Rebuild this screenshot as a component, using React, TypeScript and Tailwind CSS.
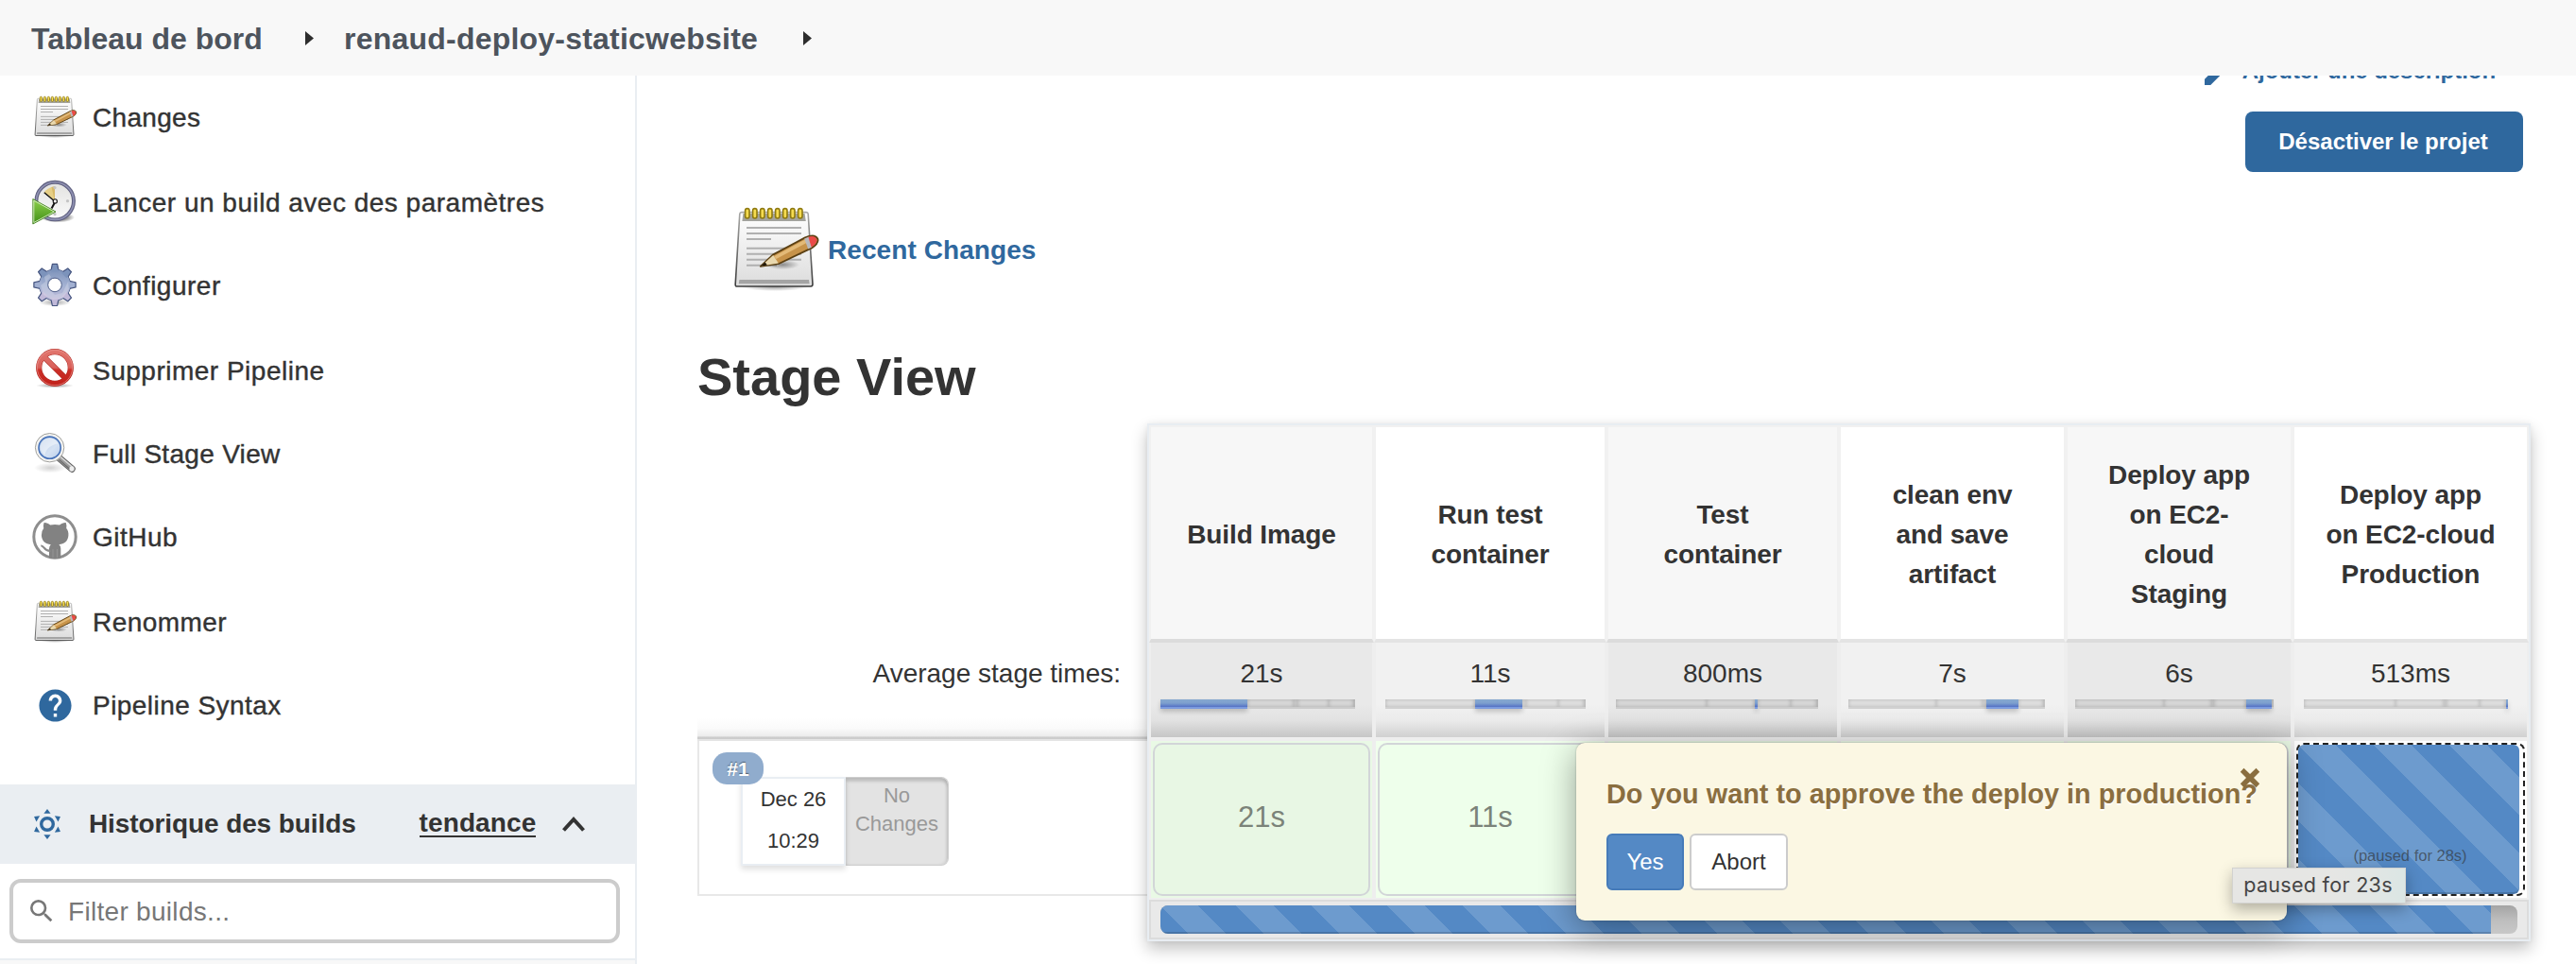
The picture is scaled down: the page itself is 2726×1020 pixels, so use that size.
import React from "react";
import { MdEdit, MdHelp, MdSearch } from "react-icons/md";

function NotepadIcon({ size = 48 }: { size?: number }) {
  return (
    <svg width={size} height={size} viewBox="0 0 48 48" className="shrink-0">
      <defs>
        <linearGradient id="np-paper" x1="0" y1="0" x2="0" y2="1">
          <stop offset="0" stopColor="#ffffff" />
          <stop offset="1" stopColor="#dcdcdc" />
        </linearGradient>
        <linearGradient id="np-edge" x1="0" y1="0" x2="0" y2="1">
          <stop offset="0" stopColor="#a8a8a6" />
          <stop offset="1" stopColor="#3c3c3c" />
        </linearGradient>
        <radialGradient id="np-shadow">
          <stop offset="0" stopColor="#000" stopOpacity=".4" />
          <stop offset="1" stopColor="#000" stopOpacity="0" />
        </radialGradient>
      </defs>
      <ellipse cx="24" cy="43.6" rx="18" ry="2.4" fill="url(#np-shadow)" />
      <path d="M6.3 4.3H40.7Q41.5 4.3 41.6 5.2L44 42.3Q44 43.5 43 43.5H4Q3 43.5 3.1 42.3L5.4 5.2Q5.5 4.3 6.3 4.3Z" fill="url(#np-paper)" stroke="url(#np-edge)" strokeWidth=".8" />
      <path d="M7.2 5H39.8L40.4 9H6.7Z" fill="#a3a39d" />
      <path d="M5.2 40H42L42.3 42.1H4.9Z" fill="#a4a4a4" />
      <g stroke="#b0b0b0" strokeWidth="1">
        <path d="M9 12.5H38M9 15.5H38M9 18.5H22M9 23.4H38M9 26.4H38M9 29.4H38M9 32.4H25" />
      </g>
      {[9.4, 13.4, 17.4, 21.4, 25.4, 29.4, 33.4, 37.4].map((x) => (
        <rect key={x} x={x - 1.1} y="2.3" width="2.2" height="5.2" rx="1.1" fill="#f6dc50" stroke="#8f7a10" strokeWidth=".8" />
      ))}
      <ellipse cx="28" cy="32" rx="9" ry="2.6" fill="url(#np-shadow)" />
      <path d="M16.4 32.9L22.9 26.8L40 17.7Q45 15.4 46.6 18.2Q47.5 20.6 43.5 23.2L26.4 31.4Z" fill="#c7934a" stroke="#5a3f12" strokeWidth=".9" strokeLinejoin="round" />
      <path d="M23.6 27.6L40 18.7L41.2 20.2L24.7 29Z" fill="#e3ba78" />
      <path d="M16.8 32.7L23.1 27L25.9 31.2Z" fill="#e9d8ae" />
      <path d="M16.4 32.9L18.8 30.8L20 32.3Z" fill="#1f1608" />
      <path d="M39.6 18.2L42 17.2L43.6 22.7L41.6 23.8Z" fill="#b9b9bd" />
      <path d="M41.7 17.4Q45 16.2 46.1 18.5Q46.7 20.5 43.3 22.8Z" fill="#ea4a48" />
    </svg>
  );
}

function ClockPlayIcon() {
  return (
    <svg width="48" height="48" viewBox="0 0 48 48" className="shrink-0">
      <defs>
        <linearGradient id="ck-play" x1="0" y1="0" x2="0" y2="1">
          <stop offset="0" stopColor="#8ed04c" />
          <stop offset="1" stopColor="#3f8f14" />
        </linearGradient>
        <linearGradient id="ck-face" x1="0" y1="0" x2="0" y2="1">
          <stop offset="0" stopColor="#e2e2e0" />
          <stop offset="1" stopColor="#fbfbfb" />
        </linearGradient>
        <radialGradient id="ck-sh">
          <stop offset=".6" stopColor="#000" stopOpacity=".4" />
          <stop offset="1" stopColor="#000" stopOpacity="0" />
        </radialGradient>
      </defs>
      <ellipse cx="27" cy="40" rx="18" ry="5.5" fill="url(#ck-sh)" />
      <circle cx="24.2" cy="22.6" r="19.8" fill="url(#ck-face)" stroke="#5f607f" strokeWidth="3.9" />
      <circle cx="24.2" cy="22.6" r="19.8" fill="none" stroke="#9092b4" strokeWidth="1.6" />
      <path d="M24 22.5L12.4 13.8Q16.5 8.2 24 7.2Z" fill="#e6cf86" />
      <path d="M24 22.5L24 7.2L20.5 8Z" fill="#d7b968" />
      <g fill="#c4c4c4">
        <circle cx="24" cy="8.6" r="1.6" />
        <circle cx="37.5" cy="22.7" r="1.6" />
        <circle cx="24" cy="36.6" r="1.6" />
      </g>
      <path d="M23.6 22.8L12.8 13.8" stroke="#111" strokeWidth="1.4" />
      <path d="M24.4 23.5L20.6 30.5" stroke="#111" strokeWidth="2" />
      <circle cx="24.3" cy="22.9" r="2.1" fill="#fff" stroke="#111" strokeWidth="1.1" />
      <path d="M.8 20.5L25 34L.8 47Z" fill="url(#ck-play)" stroke="#3d7a18" strokeWidth=".8" />
      <path d="M1.8 22.1L23.2 34L1.8 45.5Z" fill="none" stroke="#e9f7dc" strokeWidth=".8" />
    </svg>
  );
}

const GEAR_ANGLES = [0, 45, 90, 135, 180, 225, 270, 315];

function GearIcon() {
  return (
    <svg width="48" height="48" viewBox="0 0 48 48" className="shrink-0">
      <defs>
        <linearGradient id="gr-fill" gradientUnits="userSpaceOnUse" x1="0" y1="0" x2="0" y2="48">
          <stop offset="0" stopColor="#6d86b0" />
          <stop offset=".5" stopColor="#a3b1d2" />
          <stop offset="1" stopColor="#cbbfdc" />
        </linearGradient>
        <radialGradient id="gr-sh">
          <stop offset="0" stopColor="#000" stopOpacity=".35" />
          <stop offset="1" stopColor="#000" stopOpacity="0" />
        </radialGradient>
        <mask id="gr-mask">
          <rect width="48" height="48" fill="#fff" />
          <circle cx="24" cy="23.4" r="7" fill="#000" />
        </mask>
      </defs>
      <ellipse cx="24" cy="42" rx="17" ry="4" fill="url(#gr-sh)" />
      <g mask="url(#gr-mask)">
        <g fill="#45547f" stroke="#45547f" strokeWidth="1.2" strokeLinejoin="round">
          <circle cx="24" cy="23.4" r="16.4" />
          {GEAR_ANGLES.map((a) => (
            <path key={a} d="M19.8 9L21.4 1.3H26.6L28.2 9Z" transform={`rotate(${a} 24 23.4)`} />
          ))}
        </g>
        <g fill="url(#gr-fill)">
          <circle cx="24" cy="23.4" r="16.3" />
        </g>
        {GEAR_ANGLES.map((a) => (
          <path key={a} d="M20.3 9.5L21.9 1.9H26.1L27.7 9.5Z" fill={a === 0 || a === 45 || a === 315 ? "#7c93bb" : a === 90 || a === 270 ? "#a2b0d1" : "#c1b9d9"} transform={`rotate(${a} 24 23.4)`} />
        ))}
        <path d="M9 24L14 20L13 15L18 12L20 15L16 19L17 26L24 34L32 32L38 20L39 28L32 38L22 39L12 34Z" fill="#fff" opacity=".22" />
      </g>
      <circle cx="24" cy="23.4" r="7.3" fill="none" stroke="#56648c" strokeWidth="1" />
    </svg>
  );
}

function ForbiddenIcon() {
  return (
    <svg width="48" height="48" viewBox="0 0 48 48" className="shrink-0">
      <defs>
        <linearGradient id="fb-red" gradientUnits="userSpaceOnUse" x1="0" y1="1" x2="0" y2="41">
          <stop offset="0" stopColor="#e2776f" />
          <stop offset=".5" stopColor="#d9605a" />
          <stop offset=".56" stopColor="#cb2f27" />
          <stop offset="1" stopColor="#c0201a" />
        </linearGradient>
        <radialGradient id="fb-sh">
          <stop offset="0" stopColor="#000" stopOpacity=".4" />
          <stop offset="1" stopColor="#000" stopOpacity="0" />
        </radialGradient>
      </defs>
      <ellipse cx="24" cy="40" rx="20" ry="2.6" fill="url(#fb-sh)" />
      <circle cx="24" cy="21" r="16.8" fill="none" stroke="#b1302a" strokeWidth="6.2" />
      <path d="M12.3 9.3L35.7 32.7" stroke="#b1302a" strokeWidth="6" />
      <circle cx="24" cy="21" r="16.8" fill="none" stroke="url(#fb-red)" strokeWidth="5.2" />
      <path d="M12.3 9.3L35.7 32.7" stroke="url(#fb-red)" strokeWidth="4.8" />
      <circle cx="24" cy="21" r="18.6" fill="none" stroke="#eb9a95" strokeWidth=".6" />
    </svg>
  );
}

function MagnifierIcon() {
  return (
    <svg width="48" height="48" viewBox="0 0 48 48" className="shrink-0">
      <defs>
        <linearGradient id="mg-lens" x1="0" y1="0" x2="1" y2="1">
          <stop offset="0" stopColor="#b2c8e6" />
          <stop offset=".6" stopColor="#d5e2f3" />
          <stop offset="1" stopColor="#b7cdeb" />
        </linearGradient>
        <radialGradient id="mg-sh">
          <stop offset="0" stopColor="#000" stopOpacity=".18" />
          <stop offset="1" stopColor="#000" stopOpacity="0" />
        </radialGradient>
      </defs>
      <ellipse cx="19" cy="39" rx="17" ry="5.4" fill="url(#mg-sh)" />
      <path d="M28.5 28.5L42 40" stroke="#555" strokeWidth="7.4" strokeLinecap="round" />
      <path d="M28.5 28.5L42 40" stroke="#9a9a9a" strokeWidth="5.6" strokeLinecap="round" />
      <path d="M29.8 27.2L42.4 38" stroke="#dadada" strokeWidth="1.4" />
      <path d="M28.5 30.4L39.4 40" stroke="#6a6a6a" strokeWidth="1.2" />
      <ellipse cx="42" cy="40" rx="2.5" ry="2.8" fill="#ededed" />
      <circle cx="18.6" cy="17.7" r="15.2" fill="#f3f3f1" stroke="#8b8b88" strokeWidth=".8" />
      <circle cx="18.6" cy="17.7" r="11.6" fill="url(#mg-lens)" stroke="#4470b8" strokeWidth="1.6" />
      <path d="M9.2 20.5A9.8 9.8 0 0 1 27.5 13.5C22 14 15 17.5 13.4 25.5A9.8 9.8 0 0 1 9.2 20.5Z" fill="#fff" opacity=".45" />
    </svg>
  );
}

function OctocatIcon() {
  return (
    <svg width="48" height="48" viewBox="0 0 48 48" className="shrink-0">
      <circle cx="24" cy="24" r="22.2" fill="#fff" stroke="#8e8e8e" strokeWidth="3" />
      <g fill="#828282">
        <path d="M12.6 9C15 8.8 17.3 10 19.2 11.5Q24 10.6 29 11.5C31 10 33.4 8.8 35.7 9Q36.9 12 36.2 15Q38.8 18 38.4 22.6C37.9 29 34 31.6 28.4 32.2Q30.3 33.8 30.3 36.5V46.2Q24 48 18 46.2V36.5Q18.2 33.6 19.8 32.2C14.2 31.6 10.4 29 9.9 22.6Q9.6 18 12.2 15Q11.4 12 12.6 9Z" />
      </g>
      <path d="M9.3 33.5C13 33 12.6 39.6 19.5 38.9" fill="none" stroke="#8a8a8a" strokeWidth="2.2" />
      <path d="M22 37V46M26.5 37V46" stroke="#999" strokeWidth=".8" />
    </svg>
  );
}

function HelpIcon() {
  return (
    <span className="flex size-12 shrink-0 items-center justify-center text-[#2f689e]">
      <MdHelp size={41} />
    </span>
  );
}

function SunGearIcon() {
  return (
    <svg width="34" height="34" viewBox="0 0 34 34" className="shrink-0">
      <circle cx="17" cy="17" r="6.3" fill="none" stroke="#2f689e" strokeWidth="3.4" />
      {[0, 60, 120, 180, 240, 300].map((a) => (
        <path key={a} d="M13.4 5.8L17 .9L20.6 5.8Z" fill="#2f689e" transform={`rotate(${a} 17 17)`} />
      ))}
    </svg>
  );
}

function Triangle() {
  return (
    <svg width="9" height="15" viewBox="0 0 9 15" className="shrink-0">
      <path d="M0 0L9 7.5L0 15Z" fill="#2d2d2d" />
    </svg>
  );
}

const MENU: { label: string; icon: React.ReactNode; row: string; text: string }[] = [
  { label: "Changes", icon: <NotepadIcon />, row: "h-[90px]", text: "tracking-[0.3px]" },
  { label: "Lancer un build avec des paramètres", icon: <ClockPlayIcon />, row: "h-[88px]", text: "tracking-[0.5px]" },
  { label: "Configurer", icon: <GearIcon />, row: "h-[90px]", text: "tracking-[0.5px]" },
  { label: "Supprimer Pipeline", icon: <ForbiddenIcon />, row: "h-[88px]", text: "tracking-[0.5px]" },
  { label: "Full Stage View", icon: <MagnifierIcon />, row: "h-[88px]", text: "tracking-[0.3px]" },
  { label: "GitHub", icon: <OctocatIcon />, row: "h-[90px]", text: "tracking-[0.5px]" },
  { label: "Renommer", icon: <NotepadIcon />, row: "h-[88px]", text: "tracking-[0.45px]" },
  { label: "Pipeline Syntax", icon: <HelpIcon />, row: "h-[108px]", text: "tracking-[0.45px]" },
];

function Sidebar() {
  return (
    <aside className="flex w-[674px] shrink-0 flex-col border-r-2 border-[#eaeef2] pt-5">
      <nav className="flex flex-col">
        {MENU.map((m) => (
          <div key={m.label} className={`${m.row} shrink-0`}>
            <a className="flex h-12 items-center gap-4 pl-[34px]">
              {m.icon}
              <span className={`pt-0.5 text-[28px] leading-10 whitespace-nowrap [-webkit-text-stroke:0.4px_#333] ${m.text}`}>{m.label}</span>
            </a>
          </div>
        ))}
      </nav>
      <div className="-mr-0.5 flex h-[84px] shrink-0 items-center bg-[#eaeef2] pl-[33px]">
        <SunGearIcon />
        <span className="ml-[27px] text-[28px] font-bold tracking-[-0.1px] whitespace-nowrap">Historique des builds</span>
        <span className="ml-[67px] border-b-2 border-[#333] text-[28px] leading-[26px] font-bold tracking-[0.1px]">tendance</span>
        <svg width="26" height="18" viewBox="0 0 26 18" className="ml-[27px]">
          <path d="M2.5 15.5L13 4L23.5 15.5" fill="none" stroke="#333" strokeWidth="4" />
        </svg>
      </div>
      <div className="mt-4 ml-2.5 flex h-[68px] w-[646px] shrink-0 items-center rounded-xl border-4 border-[#ccc] pl-3.5 text-[#777]">
        <MdSearch size={32} />
        <span className="ml-3 pt-px text-[28px] tracking-[0.3px]">Filter builds...</span>
      </div>
      <div className="mt-4 grow border-t-2 border-[#eaeef2] bg-[#f8f8f8]" />
    </aside>
  );
}

/* Share of the whole run taken by each stage, in percent. */
const SHARES = [44.8, 23.7, 1.7, 16.2, 12.8, 0.8];

function StageBar({ active, dark, inset }: { active: number; dark: boolean; inset: string }) {
  return (
    <div className={`flex h-2.5 ${inset}`}>
      {SHARES.map((share, i) => (
        <div
          key={i}
          style={{ width: `${share}%` }}
          className={
            i === active
              ? "min-w-[2px] border-b-2 border-[#7b9ade] bg-linear-to-b from-[#87a9cf] via-[#7d9fce] to-[#5470c4] shadow-[0_3px_5px_rgba(0,0,0,0.2)]"
              : dark
                ? "border-b-2 border-[#cbcbcb] bg-[#d9d9d9] shadow-[inset_0_0_4px_rgba(0,0,0,0.22)]"
                : "border-b-2 border-[#d0d0d0] bg-[#e0e0e0] shadow-[inset_0_0_4px_rgba(0,0,0,0.2)]"
          }
        />
      ))}
    </div>
  );
}

const STAGES: { title: string[]; avg: string; run?: string; bar: string }[] = [
  { title: ["Build Image"], avg: "21s", run: "21s", bar: "ml-2.5 mr-[18px]" },
  { title: ["Run test", "container"], avg: "11s", run: "11s", bar: "ml-2.5 mr-5" },
  { title: ["Test", "container"], avg: "800ms", bar: "ml-2 mr-5" },
  { title: ["clean env", "and save", "artifact"], avg: "7s", bar: "ml-2 mr-5" },
  { title: ["Deploy app", "on EC2-", "cloud", "Staging"], avg: "6s", bar: "ml-2 mr-[18px]" },
  { title: ["Deploy app", "on EC2-cloud", "Production"], avg: "513ms", bar: "ml-2.5 mr-5" },
];

const STRIPES =
  "bg-[#5489c5] bg-[linear-gradient(45deg,rgba(255,255,255,0.15)_25%,transparent_25%,transparent_50%,rgba(255,255,255,0.15)_50%,rgba(255,255,255,0.15)_75%,transparent_75%,transparent)] bg-[length:80px_80px] shadow-[inset_0_-2px_0_rgba(0,0,0,0.15)]";

function StageColumn({ index }: { index: number }) {
  const stage = STAGES[index];
  const dark = index % 2 === 0;
  const paused = index === 5;
  return (
    <div className="flex flex-col">
      <div className={`flex h-[230px] flex-col items-center justify-center border-2 border-b-4 border-[#f1f1f1] pt-[3px] text-[28px] leading-[42px] font-bold tracking-[-0.1px] ${dark ? "border-b-[#dcdcdc] bg-[#f7f7f7]" : "border-b-[#e4e4e4] bg-white"}`}>
        {stage.title.map((line) => (
          <span key={line}>{line}</span>
        ))}
      </div>
      <div className={`h-[104px] border-x-2 border-b-4 border-[#eeeeee] pt-3 ${dark ? "bg-[linear-gradient(#e9e9e9_65%,#e2e2e2_82%,#c6c6c6)]" : "bg-[linear-gradient(#f1f1f1_65%,#ebebeb_82%,#d0d0d0)]"}`}>
        <div className="mb-1.5 text-center text-[28px] leading-[42px]">{stage.avg}</div>
        <StageBar active={index} dark={dark} inset={stage.bar} />
      </div>
      <div className={`h-[168px] border-x-2 border-b-2 border-[#eeeeee] p-0.5 ${paused ? "bg-white" : dark ? "bg-[#e9f9e5]" : "bg-[#f0ffec]"}`}>
        {paused ? (
          <div className="h-[162px] rounded-lg border-2 border-dashed border-[#222] pr-1">
            <div className={`flex h-[158px] w-[234px] items-end justify-center rounded-md ${STRIPES}`}>
              <span className="mb-[29px] ml-[3px] text-[16.5px] leading-6 text-[#333]/65">(paused for 28s)</span>
            </div>
          </div>
        ) : (
          <div className={`flex h-[162px] items-center justify-center rounded-[10px] border-2 border-[#d2d5d8] pb-[3px] text-[31px] text-[#7b8379] ${dark ? "bg-[#e8f7e4]" : "bg-[#eeffeb]"}`}>
            {stage.run}
          </div>
        )}
      </div>
    </div>
  );
}

function RunInfo() {
  return (
    <div className="flex w-[476px] shrink-0 flex-col pt-[232px]">
      <div className="flex h-[104px] items-start justify-end border-b-2 border-[#e4e4e4] bg-[linear-gradient(#ffffff_78%,#fafafa_89%,#ececec_97%,#cccccc_98%)] pt-3 pr-[28px]">
        <span className="text-[28px] leading-[42px]">Average stage times:</span>
      </div>
      <div className="relative h-[164px] border-b-2 border-l-2 border-[#e8e8e8] pt-[38px] pl-11">
        <div className="flex">
          <div className="z-10 flex h-[94px] w-[111px] flex-col items-center justify-between border-2 border-[#e9eef3] bg-white pb-1 text-[22px] leading-[44px] shadow-[0_4px_6px_rgba(0,0,0,0.12)]">
            <span>Dec 26</span>
            <span>10:29</span>
          </div>
          <div className="h-[94px] w-[109px] rounded-r-lg border border-l-0 border-[#cfcfcf] bg-[#e3e3e3] pt-[4px] text-center text-[22px] leading-[30px] text-[#999] shadow-[inset_0_4px_3px_rgba(0,0,0,0.15),inset_-2px_0_3px_rgba(0,0,0,0.08)]">
            No
            <br />
            Changes
          </div>
        </div>
        <span className="absolute top-3 left-3.5 z-20 flex h-[34px] w-[54px] items-center justify-center rounded-[15px] bg-[#90accd] pt-px text-[21px] leading-none font-bold text-white [text-shadow:0_-1px_1px_rgba(0,0,0,0.45)]">
          #1
        </span>
      </div>
    </div>
  );
}

function ApprovePopover() {
  return (
    <div className="absolute top-[336px] left-[452px] z-30 h-[188px] w-[752px] rounded-[9px] bg-[#fbf7e3] pt-[35px] pl-8 shadow-[0_8px_36px_rgba(0,0,0,0.38),0_0_2px_rgba(0,0,0,0.3)]">
      <svg width="22" height="22" viewBox="0 0 22 22" className="absolute top-[26px] right-[28px]">
        <path d="M4.5 .8L11 7L17.5 .8L21.2 4.8L15 11L21.2 17.2L17.5 21.2L11 15L4.5 21.2L.8 17.2L7 11L.8 4.8Z" fill="#8a6e3f" />
      </svg>
      <div className="relative text-[28.8px] leading-[38px] font-bold tracking-[0.02px] whitespace-nowrap text-[#8a6e3f] [text-shadow:0_2px_0_rgba(255,255,255,0.8)]">
        Do you want to approve the deploy in production?
      </div>
      <div className="mt-[23px] flex gap-1.5 text-[24px]">
        <button className="h-[60px] w-[82px] rounded-md border-2 border-[#467bb9] bg-[#5489c5] text-white">Yes</button>
        <button className="h-[60px] w-[104px] rounded-md border-2 border-[#ccc] bg-white">Abort</button>
      </div>
    </div>
  );
}

function StageTable() {
  return (
    <div className="flex">
      <RunInfo />
      <div className="relative h-[548px] w-[1464px] shrink-0 border-2 border-[#e8edf2] bg-white shadow-[0_8px_16px_rgba(0,0,0,0.24),0_0_6px_rgba(0,0,0,0.05)]">
        <div className="grid grid-cols-[238px_246px_246px_240px_240px_250px]">
          {STAGES.map((_, i) => (
            <StageColumn key={i} index={i} />
          ))}
        </div>
        <div className="h-[42px] border-2 border-[#dcdcdc] bg-[#e9e9e9] px-2.5 py-1">
          <div className="h-[30px] w-[1436px] overflow-hidden rounded-lg bg-[linear-gradient(#a4a4a4,#bdbdbd_50%,#c8c8c8)]">
            <div className={`h-[30px] w-[1408px] ${STRIPES}`} />
          </div>
        </div>
        <ApprovePopover />
        <div className="absolute top-[468px] left-[1146px] z-40 flex h-[38px] w-[184px] items-center justify-center border border-[#d2d2d0] bg-[linear-gradient(90deg,#e6e6e4_55%,#e2e6e4_80%,#dbe6e4)] pr-0.5 pb-0.5 font-[Inter] text-[21.5px] tracking-[0.3px] whitespace-nowrap text-[#444] shadow-[0_6px_16px_rgba(0,0,0,0.3)]">
          paused for 23s
        </div>
      </div>
    </div>
  );
}

export default function App() {
  return (
    <div className="flex h-[1020px] w-full flex-col overflow-hidden bg-white font-['Liberation_Sans',Arial,sans-serif] text-[#333]">
      <header className="flex h-20 shrink-0 items-center bg-[#f8f8f8] pl-[33px] text-[32px] font-bold text-[#4d545d]">
        <span className="w-[290px] pt-0.5 whitespace-nowrap">Tableau de bord</span>
        <Triangle />
        <span className="ml-[32px] w-[486px] pt-0.5 whitespace-nowrap tracking-[0.22px]">renaud-deploy-staticwebsite</span>
        <Triangle />
      </header>
      <div className="flex min-h-0 grow">
        <Sidebar />
        <main className="flex grow flex-col overflow-hidden pl-16">
          <div className="flex h-[128px] flex-col items-end pr-14">
            <div className="-mt-[25px] flex items-center pr-[29px] font-bold text-[#2f689e]">
              <MdEdit size={40} />
              <span className="ml-[5px] text-[24px] leading-6 tracking-[-0.05px]">Ajouter une description</span>
            </div>
            <button className="mt-[23px] h-16 w-[294px] shrink-0 rounded-lg bg-[#2f689e] pr-0.5 text-[24px] font-bold text-white">Désactiver le projet</button>
          </div>
          <div className="mt-2 ml-[34px] flex items-center text-[28px] font-bold text-[#2f689e]">
            <NotepadIcon size={96} />
            <span className="ml-2 pt-px tracking-[0.08px]">Recent Changes</span>
          </div>
          <h1 className="mt-[59px] mb-[21px] text-[56px] leading-[56px] font-bold">
            Stage View
          </h1>
          <StageTable />
        </main>
      </div>
    </div>
  );
}
